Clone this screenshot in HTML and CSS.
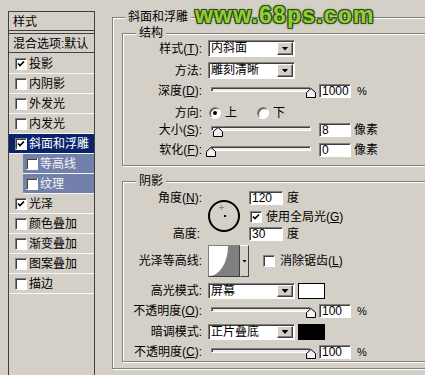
FILE: index.html
```html
<!DOCTYPE html>
<html>
<head>
<meta charset="utf-8">
<title>图层样式</title>
<link rel="stylesheet" href="styles.css">
</head>
<body>
<div class="dialog">
  <ul class="style-list">
    <li class="list-head">样式</li>
    <li class="list-blend">混合选项:默认</li>
    <li class="layer"><span class="chk"><svg width="8" height="8" viewBox="0 0 8 8"><path d="M1 3.5L3 5.5L7 1.5" fill="none" stroke="#000" stroke-width="1.7"/></svg></span>投影</li>
    <li class="layer"><span class="chk"></span>内阴影</li>
    <li class="layer"><span class="chk"></span>外发光</li>
    <li class="layer"><span class="chk"></span>内发光</li>
    <li class="layer sel"><span class="chk"><svg width="8" height="8" viewBox="0 0 8 8"><path d="M1 3.5L3 5.5L7 1.5" fill="none" stroke="#000" stroke-width="1.7"/></svg></span>斜面和浮雕</li>
    <li class="layer sub"><span class="chk"></span>等高线</li>
    <li class="layer sub"><span class="chk"></span>纹理</li>
    <li class="layer"><span class="chk"><svg width="8" height="8" viewBox="0 0 8 8"><path d="M1 3.5L3 5.5L7 1.5" fill="none" stroke="#000" stroke-width="1.7"/></svg></span>光泽</li>
    <li class="layer"><span class="chk"></span>颜色叠加</li>
    <li class="layer"><span class="chk"></span>渐变叠加</li>
    <li class="layer"><span class="chk"></span>图案叠加</li>
    <li class="layer"><span class="chk"></span>描边</li>
  </ul>

  <div class="options">
    <fieldset class="grp grp-main">
      <legend>斜面和浮雕</legend>

      <fieldset class="grp grp-sub">
        <legend>结构</legend>
        <div class="row r-style">
          <span class="lbl">样式(<u>T</u>):</span>
          <div class="select"><span>内斜面</span><i class="drop"></i></div>
        </div>
        <div class="row r-method">
          <span class="lbl">方法:</span>
          <div class="select"><span>雕刻清晰</span><i class="drop"></i></div>
        </div>
        <div class="row r-depth">
          <span class="lbl">深度(<u>D</u>):</span>
          <div class="slider"><div class="track"></div><svg class="thumb" style="left:100px" width="10" height="10" viewBox="0 0 10 10"><path d="M0.5 9.5V4.5L5 0.5L9.5 4.5V9.5Z" fill="#f2f2f2" stroke="#000"/></svg></div>
          <span class="num">1000</span><span class="unit pct">%</span>
        </div>
        <div class="row r-dir">
          <span class="lbl">方向:</span>
          <span class="radio on"></span><span class="radio-text">上</span>
          <span class="radio second"></span><span class="radio-text">下</span>
        </div>
        <div class="row r-size">
          <span class="lbl">大小(<u>S</u>):</span>
          <div class="slider"><div class="track"></div><svg class="thumb" style="left:7px" width="10" height="10" viewBox="0 0 10 10"><path d="M0.5 9.5V4.5L5 0.5L9.5 4.5V9.5Z" fill="#f2f2f2" stroke="#000"/></svg></div>
          <span class="num">8</span><span class="unit">像素</span>
        </div>
        <div class="row r-soft">
          <span class="lbl">软化(<u>F</u>):</span>
          <div class="slider"><div class="track"></div><svg class="thumb" style="left:0px" width="10" height="10" viewBox="0 0 10 10"><path d="M0.5 9.5V4.5L5 0.5L9.5 4.5V9.5Z" fill="#f2f2f2" stroke="#000"/></svg></div>
          <span class="num">0</span><span class="unit">像素</span>
        </div>
      </fieldset>

      <fieldset class="grp grp-sub grp-shade">
        <legend>阴影</legend>
        <div class="angle">
          <span class="a-lbl">角度(<u>N</u>):</span>
          <svg class="dial" width="34" height="34" viewBox="0 0 34 34">
            <circle cx="17" cy="17" r="15" fill="none" stroke="#000" stroke-width="2"/>
            <rect x="17" y="16" width="2" height="2" fill="#000"/>
            <path d="M12 8.5h5M14.5 6v5" stroke="#8a8a8a" stroke-width="1"/>
          </svg>
          <div class="a-val"><span class="num wide">120</span><span class="unit">度</span></div>
          <div class="a-global"><span class="chk"><svg width="8" height="8" viewBox="0 0 8 8"><path d="M1 3.5L3 5.5L7 1.5" fill="none" stroke="#000" stroke-width="1.7"/></svg></span><span class="chk-text">使用全局光(<u>G</u>)</span></div>
          <span class="h-lbl">高度:</span>
          <div class="a-alt"><span class="num wide">30</span><span class="unit">度</span></div>
        </div>

        <div class="row r-contour">
          <span class="lbl">光泽等高线:</span>
          <div class="contour">
            <span class="contour-img"><svg width="30" height="30" viewBox="0 0 30 30"><path d="M19 0H30V30H0A19 30 0 0 0 19 0Z" fill="#808080"/></svg></span>
            <span class="contour-btn"></span>
          </div>
          <span class="chk chk-aa"></span><span class="chk-text">消除锯齿(<u>L</u>)</span>
        </div>
        <div class="row r-mode">
          <span class="lbl">高光模式:</span>
          <div class="select"><span>屏幕</span><i class="drop"></i></div>
          <span class="swatch"></span>
        </div>
        <div class="row r-opac">
          <span class="lbl">不透明度(<u>O</u>):</span>
          <div class="slider"><div class="track"></div><svg class="thumb" style="left:100px" width="10" height="10" viewBox="0 0 10 10"><path d="M0.5 9.5V4.5L5 0.5L9.5 4.5V9.5Z" fill="#f2f2f2" stroke="#000"/></svg></div>
          <span class="num">100</span><span class="unit pct">%</span>
        </div>
        <div class="row r-mode">
          <span class="lbl">暗调模式:</span>
          <div class="select"><span>正片叠底</span><i class="drop"></i></div>
          <span class="swatch dark"></span>
        </div>
        <div class="row r-opac">
          <span class="lbl">不透明度(<u>C</u>):</span>
          <div class="slider"><div class="track"></div><svg class="thumb" style="left:100px" width="10" height="10" viewBox="0 0 10 10"><path d="M0.5 9.5V4.5L5 0.5L9.5 4.5V9.5Z" fill="#f2f2f2" stroke="#000"/></svg></div>
          <span class="num">100</span><span class="unit pct">%</span>
        </div>
      </fieldset>
    </fieldset>
  </div>

  <div class="watermark">www.68ps.com</div>
</div>
</body>
</html>
```

FILE: styles.css
```css
* {
    margin: 0;
    padding: 0;
    box-sizing: border-box;
}

body {
    background: #d4d0c8;
    color: #000;
    font-family: "Liberation Sans", "Noto Sans CJK SC", sans-serif;
    font-size: 12px;
    line-height: 14px;
    width: 425px;
    height: 375px;
    overflow: hidden;
}

u {
    text-decoration: underline;
}

.dialog {
    position: relative;
    display: flex;
    align-items: flex-start;
    padding-left: 8px;
}

/* left list of styles */
.style-list {
    flex: none;
    list-style: none;
    width: 87px;
    height: 380px;
    margin-top: 11px;
    border: 1px solid #404040;
    border-bottom: none;
}

.list-head {
    height: 19px;
    padding: 3px 0 0 4px;
    border-bottom: 1px solid #404040;
    margin-bottom: 2px;
}

.list-blend {
    height: 20px;
    padding: 3px 0 0 4px;
    border-top: 1px solid #404040;
    border-bottom: 1px solid #404040;
    margin-bottom: 1px;
    white-space: nowrap;
}

.layer {
    display: flex;
    align-items: center;
    height: 20px;
    border-bottom: 1px solid #f6f6f4;
    white-space: nowrap;
}

.layer .chk {
    margin: 0 2px 0 6px;
}

.layer.sel {
    background: #0a246a;
    color: #fff;
}

.layer.sub {
    margin-left: 14px;
    background: #7380ab;
    color: #f4f4f4;
}

.layer.sub .chk {
    margin-left: 3px;
}

/* form bits */
.chk {
    flex: none;
    display: flex;
    align-items: center;
    justify-content: center;
    width: 12px;
    height: 12px;
    background: #fff;
    border: 1px solid;
    border-color: #808080 #fff #fff #808080;
    box-shadow: inset 1px 1px 0 #404040;
}

.radio {
    flex: none;
    display: flex;
    align-items: center;
    justify-content: center;
    width: 12px;
    height: 12px;
    margin-left: 1px;
    border-radius: 50%;
    background: #fff;
    border: 1px solid;
    border-color: #808080 #fff #fff #808080;
    box-shadow: inset 1px 1px 0 #404040;
}

.radio.on::after {
    content: "";
    width: 4px;
    height: 4px;
    border-radius: 50%;
    background: #000;
}

.radio.second {
    margin-left: 20px;
}

.radio-text {
    margin-left: 4px;
}

.select {
    flex: none;
    display: flex;
    align-items: stretch;
    justify-content: space-between;
    width: 87px;
    height: 17px;
    padding: 1px 1px 1px 1px;
    background: #fff;
    border: 1px solid;
    border-color: #808080 #fff #fff #808080;
    box-shadow: inset 1px 1px 0 #404040;
    white-space: nowrap;
}

.select span {
    padding-left: 1px;
    line-height: 13px;
}

.drop {
    flex: none;
    display: flex;
    align-items: center;
    justify-content: center;
    width: 16px;
    background: #d4d0c8;
    border: 1px solid;
    border-color: #fff #404040 #404040 #fff;
    box-shadow: inset -1px -1px 0 #808080;
}

.drop::before {
    content: "";
    width: 7px;
    height: 4px;
    background: #000;
    clip-path: polygon(0 0, 100% 0, 50% 100%);
}

.num {
    flex: none;
    width: 32px;
    height: 14px;
    margin-left: 3px;
    padding-left: 2px;
    line-height: 12px;
    background: #fff;
    border: 1px solid;
    border-color: #808080 #fff #fff #808080;
    box-shadow: inset 1px 1px 0 #404040;
}

.num.wide {
    width: 34px;
    margin-left: 0;
}

.unit {
    margin-left: 3px;
    white-space: nowrap;
}

.unit.pct {
    margin-left: 6px;
    font-size: 11px;
}

.slider {
    position: relative;
    flex: none;
    width: 110px;
    height: 14px;
    margin-left: -2px;
    padding: 3px 5px 0;
}

.track {
    height: 5px;
    background: #eeede9;
    border: 1px solid;
    border-color: #808080 #fff #fff #808080;
    box-shadow: inset 1px 1px 0 #404040;
}

.thumb {
    position: absolute;
    top: 4px;
}

.swatch {
    flex: none;
    width: 27px;
    height: 16px;
    margin-left: 3px;
    background: #fff;
    border: 1px solid #000;
}

.swatch.dark {
    background: #000;
}

/* group boxes */
.options {
    flex: none;
    margin-left: 17px;
    padding-top: 10px;
}

.grp {
    border: 1px solid #808080;
    box-shadow: 1px 1px 0 #fff, inset 1px 1px 0 #fff;
}

.grp > legend {
    position: relative;
    margin-left: 3px;
    padding: 0 3px;
    line-height: 14px;
    background: #d4d0c8;
}

.grp-main {
    width: 330px;
    padding: 0 0 6px 9px;
}

.grp-sub {
    width: 312px;
    margin-top: 2px;
    padding: 0 0 8px 0;
}

.grp-sub > legend {
    margin-left: 13px;
}

.grp-shade {
    margin-top: 8px;
    padding-bottom: 2px;
}

.row {
    display: flex;
    align-items: center;
    white-space: nowrap;
}

.lbl {
    flex: none;
    width: 79px;
    margin-right: 6px;
    text-align: right;
}

.r-style { height: 17px; }
.r-method { height: 17px; margin-top: 5px; }
.r-depth { height: 14px; margin-top: 5px; }
.r-dir { height: 14px; margin-top: 8px; }
.r-size { height: 14px; margin-top: 3px; }
.r-soft { height: 14px; margin-top: 6px; }

/* angle block */
.angle {
    display: grid;
    grid-template-columns: 79px 47px auto;
    grid-template-rows: 14px 19px 17px;
    margin-top: 3px;
    white-space: nowrap;
}

.a-lbl {
    grid-column: 1;
    grid-row: 1;
    text-align: right;
}

.dial {
    grid-column: 2;
    grid-row: 1 / 4;
    align-self: start;
    margin: 8px 0 0 5px;
}

.a-val {
    grid-column: 3;
    grid-row: 1;
    display: flex;
    align-items: center;
}

.a-val .unit,
.a-alt .unit {
    margin-left: 4px;
}

.a-global {
    grid-column: 3;
    grid-row: 2;
    align-self: end;
    display: flex;
    align-items: center;
    margin-left: 1px;
}

.chk-text {
    margin-left: 4px;
}

.h-lbl {
    grid-column: 1;
    grid-row: 3;
    align-self: end;
    text-align: right;
    padding-right: 2px;
}

.a-alt {
    grid-column: 3;
    grid-row: 3;
    align-self: end;
    display: flex;
    align-items: center;
}

/* gloss contour */
.r-contour {
    height: 32px;
    margin-top: 4px;
}

.contour {
    flex: none;
    display: flex;
    height: 32px;
}

.contour-img {
    width: 32px;
    height: 32px;
    background: #fff;
    border: 1px solid;
    border-color: #808080 #404040 #404040 #808080;
}

.contour-img svg {
    display: block;
}

.contour-btn {
    display: flex;
    align-items: center;
    justify-content: center;
    width: 9px;
    background: #d4d0c8;
    border: 1px solid;
    border-color: #fff #404040 #404040 #d4d0c8;
}

.contour-btn::before {
    content: "";
    width: 5px;
    height: 3px;
    background: #000;
    clip-path: polygon(0 0, 100% 0, 50% 100%);
}

.chk-aa {
    margin-left: 14px;
}

.r-contour .chk-text {
    margin-left: 5px;
}

.r-mode {
    height: 16px;
    margin-top: 6px;
}

.r-mode .select {
    height: 16px;
}

.r-opac {
    height: 14px;
    margin-top: 5px;
}

/* site mark over the dialog */
.watermark {
    position: absolute;
    left: 195px;
    top: 2px;
    font-family: "Liberation Sans", sans-serif;
    font-weight: bold;
    font-size: 23px;
    line-height: 26px;
    letter-spacing: 1.2px;
    color: #95cd3a;
    text-shadow: 1px 0 0 #2c520c, -1px 0 0 #2c520c, 0 1px 0 #2c520c, 0 -1px 0 #2c520c,
                 1px 1px 0 #2c520c, -1px -1px 0 #2c520c, 1px -1px 0 #2c520c, -1px 1px 0 #2c520c,
                 0 0 3px #1a1a1a;
}
```
